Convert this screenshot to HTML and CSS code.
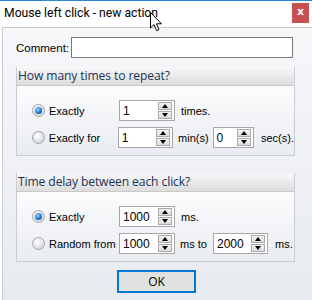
FILE: index.html
```html
<!DOCTYPE html>
<html lang="en">
<head>
    <meta charset="UTF-8">
    <title>Mouse left click - new action</title>
    <link rel="stylesheet" href="styles.css">
</head>
<body>
    <div class="window">
        <div class="titlebar">
            <span class="title">Mouse left click - new action</span>
            <span class="close">x</span>
        </div>
        <div class="client">
            <div class="comment-row">
                <label for="comment">Comment:</label>
                <input type="text" id="comment" class="textbox">
            </div>

            <section class="group">
                <div class="group-head">How many times to repeat?</div>
                <div class="group-body">
                    <div class="row">
                        <span class="radio checked"></span>
                        <span class="opt">Exactly</span>
                        <span class="spin w56"><span class="val">1</span><span class="arrows"><i class="btn up"></i><i class="btn down"></i></span></span>
                        <span class="unit">times.</span>
                    </div>
                    <div class="row">
                        <span class="radio"></span>
                        <span class="opt">Exactly for</span>
                        <span class="spin w56"><span class="val">1</span><span class="arrows"><i class="btn up"></i><i class="btn down"></i></span></span>
                        <span class="unit u-min">min(s)</span>
                        <span class="spin w42"><span class="val">0</span><span class="arrows"><i class="btn up"></i><i class="btn down"></i></span></span>
                        <span class="unit u-sec">sec(s).</span>
                    </div>
                </div>
            </section>

            <section class="group">
                <div class="group-head">Time delay between each click?</div>
                <div class="group-body">
                    <div class="row">
                        <span class="radio checked"></span>
                        <span class="opt">Exactly</span>
                        <span class="spin w56"><span class="val">1000</span><span class="arrows"><i class="btn up"></i><i class="btn down"></i></span></span>
                        <span class="unit">ms.</span>
                    </div>
                    <div class="row">
                        <span class="radio"></span>
                        <span class="opt">Random from</span>
                        <span class="spin w56"><span class="val">1000</span><span class="arrows"><i class="btn up"></i><i class="btn down"></i></span></span>
                        <span class="unit u-msto">ms to</span>
                        <span class="spin w55"><span class="val">2000</span><span class="arrows"><i class="btn up"></i><i class="btn down"></i></span></span>
                        <span class="unit u-ms">ms.</span>
                    </div>
                </div>
            </section>

            <div class="actions">
                <button class="ok">OK</button>
            </div>
        </div>

        <svg class="cursor" width="13" height="20" viewBox="0 0 13 20">
            <path d="M0.5 0.5 L0.5 16 L4 12.6 L6.6 18.6 L9 17.6 L6.5 11.8 L11.5 11.8 Z" fill="#fff" stroke="#000" stroke-width="1"/>
        </svg>
    </div>
</body>
</html>
```

FILE: styles.css
```css
body {
    margin: 0;
    font-family: 'Liberation Sans', Arial, sans-serif;
    font-size: 11px;
    color: #000;
}
.window {
    position: relative;
    width: 312px;
    height: 300px;
    background: #fff;
    border-top: 1px solid #2b88d8;
    box-sizing: border-box;
    overflow: hidden;
}
.titlebar {
    height: 26px;
    display: flex;
    align-items: flex-start;
    justify-content: space-between;
}
.title {
    font-family: Roboto, 'Liberation Sans', sans-serif;
    font-size: 12.2px;
    color: #000;
    margin: 5px 0 0 4px;
}
.close {
    width: 17px;
    height: 20px;
    margin: 2px 3px 0 0;
    background: #c75050;
    color: #fff;
    font-family: 'DejaVu Sans', sans-serif;
    font-weight: bold;
    font-size: 11px;
    line-height: 18px;
    text-align: center;
}
.client {
    margin-left: 2px;
    height: 272px;
    border-left: 1px solid #c6cad1;
    border-top: 1px solid #c6cad1;
    border-bottom: 1px solid #c6cad1;
    background: linear-gradient(#f6f7f9, #e7eaf0);
    padding: 9px 0 0 13px;
    box-sizing: content-box;
}
.comment-row {
    display: flex;
    align-items: center;
    height: 21px;
}
.comment-row label {
    width: 55px;
    font-size: 11.5px;
    padding-top: 1px;
}
.textbox {
    width: 222px;
    height: 21px;
    margin: 0;
    border: 1px solid #7a7a7a;
    box-sizing: border-box;
    background: #fff;
    padding: 0;
}
.group {
    width: 279px;
    margin-top: 9px;
    border: 1px solid #c9cdd3;
    border-top: none;
    box-sizing: border-box;
}
.group + .group {
    margin-top: 17px;
}
.group-head {
    height: 18px;
    line-height: 18px;
    padding-left: 1px;
    font-family: 'Open Sans', 'Noto Sans', sans-serif;
    font-size: 12.1px;
    color: #1b3458;
    background: linear-gradient(#f9f9f9, #dcdcdc);
    border-bottom: 1px solid #c9c9c9;
    letter-spacing: -0.1px;
}
.group-body {
    background: linear-gradient(#fcfcfd, #e9ecf1);
    padding: 14px 0 7px 15px;
    display: flex;
    flex-direction: column;
    gap: 6px;
}
.row {
    display: flex;
    align-items: center;
    height: 21px;
}
.radio {
    width: 13px;
    height: 13px;
    border-radius: 50%;
    box-sizing: border-box;
    border: 1px solid #a5a8ae;
    background: radial-gradient(circle at 40% 35%, #ffffff, #d6d8dc 75%);
    display: flex;
    align-items: center;
    justify-content: center;
}
.radio.checked::after {
    content: "";
    width: 7px;
    height: 7px;
    border-radius: 50%;
    background: radial-gradient(circle at 40% 35%, #8fd0ff, #1a6fc4 60%, #0b4d96);
}
.opt {
    width: 70px;
    margin-left: 4px;
}
.spin {
    display: flex;
    align-items: center;
    justify-content: space-between;
    height: 21px;
    background: #fff;
    border: 1px solid #a7a7a7;
    box-sizing: border-box;
    padding: 1px 1px 1px 3px;
}
.w56 { width: 56px; }
.w42 { width: 42px; }
.w55 { width: 55px; }
.val {
    font-size: 12px;
    padding-top: 1px;
}
.arrows {
    display: flex;
    flex-direction: column;
    gap: 1px;
    width: 14px;
    height: 17px;
    margin-right: 1px;
}
.btn {
    flex: 1;
    border: 1px solid #a9a9a9;
    background: linear-gradient(#f4f4f4, #dcdcdc);
    display: flex;
    align-items: center;
    justify-content: center;
}
.btn::after {
    content: "";
    border-left: 3px solid transparent;
    border-right: 3px solid transparent;
}
.up::after { border-bottom: 4px solid #000; }
.down::after { border-top: 4px solid #000; }
.unit {
    margin-left: 6px;
}
.u-min { width: 35px; margin-left: 5px; }
.u-sec { margin-left: 7px; }
.u-msto { width: 33px; margin-left: 5px; }
.u-ms { margin-left: 7px; }
.actions {
    width: 279px;
    display: flex;
    justify-content: center;
    margin-top: 8px;
}
.ok {
    width: 79px;
    height: 23px;
    margin-left: 2px;
    border: 2px solid #0078d7;
    background: #e1e1e1;
    font-family: 'Open Sans', 'Noto Sans', sans-serif;
    font-size: 12px;
    color: #000;
    padding: 0;
}
.cursor {
    position: absolute;
    left: 150px;
    top: 11px;
}
```
